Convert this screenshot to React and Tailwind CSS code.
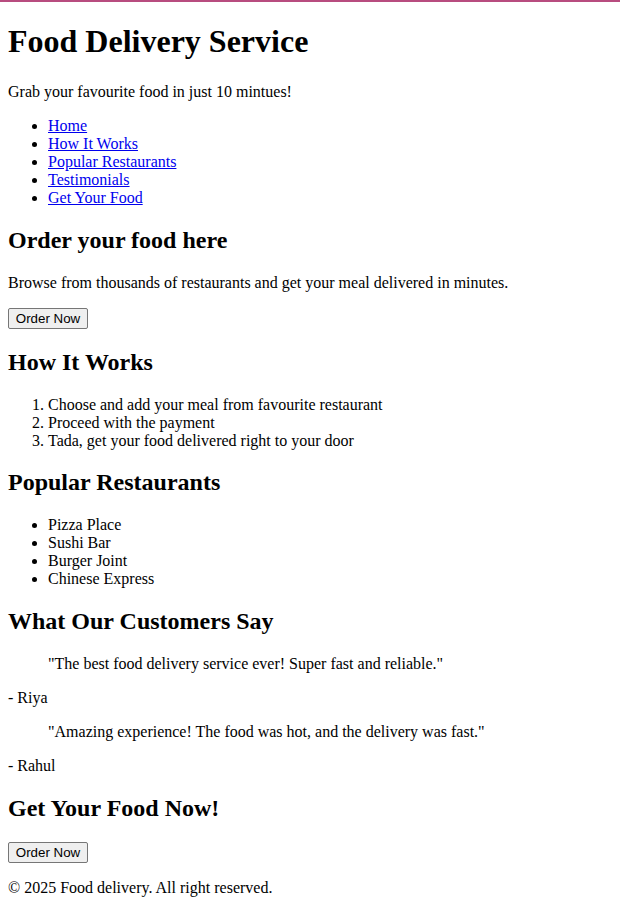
export default function App() {
  const links = ["Home", "How It Works", "Popular Restaurants", "Testimonials", "Get Your Food"];
  const restaurants = ["Pizza Place", "Sushi Bar", "Burger Joint", "Chinese Express"];
  const btn =
    "font-['Liberation_Sans',Arial,sans-serif] text-[13.333px] leading-[normal] text-black bg-[#efefef] border border-[#767676] rounded-[2px] h-[21px] w-[80px] px-[6px]";

  return (
    <div className="font-['Liberation_Serif','Times_New_Roman',serif] text-[16px] leading-[normal] text-black bg-white m-2">
      <div className="fixed top-0 left-0 right-0 h-[2px] bg-[#b84c7f]"></div>
      <header>
        <h1 className="text-[32px] font-bold mt-[22.5px] mb-[23.44px]">Food Delivery Service</h1>
        <p className="my-4">Grab your favourite food in just 10 mintues!</p>
        <nav>
          <ul className="list-disc pl-10 my-4">
            {links.map((l) => (
              <li key={l}>
                <a href="#" className="text-[#0000ee] underline">
                  {l}
                </a>
              </li>
            ))}
          </ul>
        </nav>
      </header>

      <section>
        <h2 className="text-[24px] font-bold my-[19.92px]">Order your food here</h2>
        <p className="my-4">Browse from thousands of restaurants and get your meal delivered in minutes.</p>
        <button className={btn}>Order Now</button>
      </section>

      <section>
        <h2 className="text-[24px] font-bold my-[19.92px]">How It Works</h2>
        <ol className="list-decimal pl-10 my-4">
          <li>Choose and add your meal from favourite restaurant</li>
          <li>Proceed with the payment</li>
          <li>Tada, get your food delivered right to your door</li>
        </ol>
      </section>

      <section>
        <h2 className="text-[24px] font-bold my-[19.92px]">Popular Restaurants</h2>
        <ul className="list-disc pl-10 my-4">
          {restaurants.map((r) => (
            <li key={r}>{r}</li>
          ))}
        </ul>
      </section>

      <section>
        <h2 className="text-[24px] font-bold my-[19.92px]">What Our Customers Say</h2>
        <blockquote className="my-4 mx-10">"The best food delivery service ever! Super fast and reliable."</blockquote>
        <p className="my-4">- Riya</p>
        <blockquote className="my-4 mx-10">"Amazing experience! The food was hot, and the delivery was fast."</blockquote>
        <p className="my-4">- Rahul</p>
      </section>

      <section>
        <h2 className="text-[24px] font-bold my-[19.92px]">Get Your Food Now!</h2>
        <button className={btn}>Order Now</button>
      </section>

      <footer>
        <p className="my-4">© 2025 Food delivery. All right reserved.</p>
      </footer>
    </div>
  );
}
